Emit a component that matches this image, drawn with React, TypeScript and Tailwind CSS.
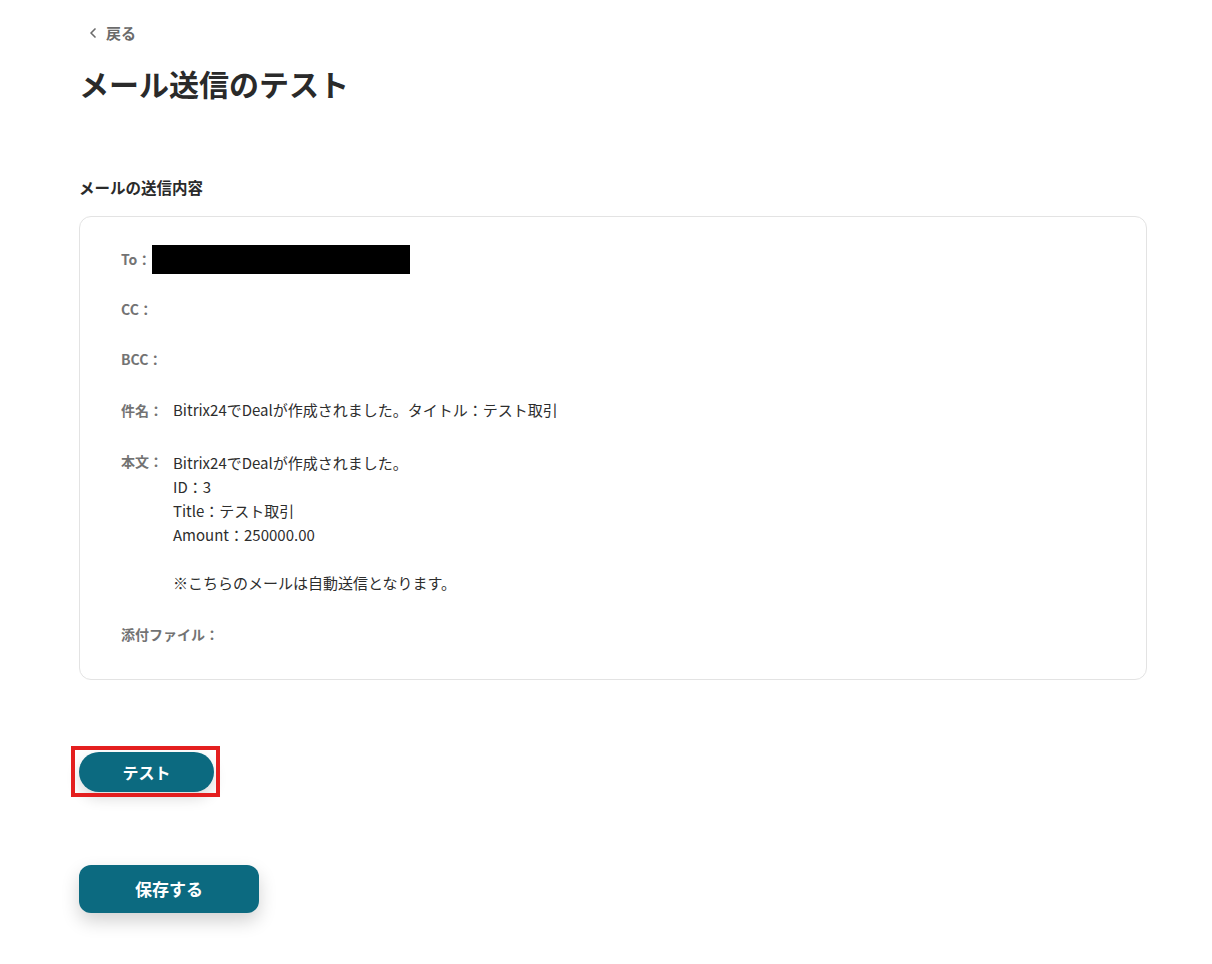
import { ChevronLeft } from "lucide-react";

const font = { fontFamily: '"Noto Sans CJK JP", "Noto Sans", sans-serif' };

const bodyLines = [
  "Bitrix24でDealが作成されました。",
  "ID：3",
  "Title：テスト取引",
  "Amount：250000.00",
  "",
  "※こちらのメールは自動送信となります。",
];

function Row({
  label,
  children,
  className = "",
}: {
  label: string;
  children?: React.ReactNode;
  className?: string;
}) {
  return (
    <div className={`flex items-start ${className}`}>
      <span className="text-sm leading-6 font-semibold text-[#737373] whitespace-nowrap">
        {label}
      </span>
      {children}
    </div>
  );
}

export default function App() {
  return (
    <div className="min-h-screen bg-white text-[#2d2d2d]" style={font}>
      <div className="w-[1068px] ml-[79px] pt-[22px] pb-[50px]">
        {/* Back link */}
        <button className="flex items-center gap-[5px] text-[15px] font-semibold text-[#6b6b6b] ml-[6px]">
          <ChevronLeft className="w-4 h-4" strokeWidth={2.5} />
          戻る
        </button>

        <h1 className="mt-[18px] text-[30px] font-bold leading-10 text-[#2a2a2a]">
          メール送信のテスト
        </h1>

        <h2 className="mt-[72px] text-[15.5px] font-semibold leading-6 text-[#2a2a2a]">
          メールの送信内容
        </h2>

        {/* Mail card */}
        <div className="mt-[17px] rounded-xl border border-[#e3e3e3] pl-[41px] pr-8 pt-[28px] pb-[33px]">
          <div className="flex items-center">
            <span className="text-sm font-semibold text-[#737373]">To：</span>
            <div className="ml-[1px] h-[29px] w-[258px] bg-black" />
          </div>

          <Row label="CC：" className="mt-[23px]" />
          <Row label="BCC：" className="mt-[26px]" />
          <Row label="件名：" className="mt-[27px]">
            <span className="ml-[10px] text-[15px] leading-6 text-[#2d2d2d]">
              Bitrix24でDealが作成されました。タイトル：テスト取引
            </span>
          </Row>
          <Row label="本文：" className="mt-[27px]">
            <div className="ml-[10px] mt-[2px] flex flex-col text-[15px] text-[#2d2d2d]">
              {bodyLines.map((line, i) => (
                <span key={i} className="h-6 leading-6">
                  {line}
                </span>
              ))}
            </div>
          </Row>
          <Row label="添付ファイル：" className="mt-[27px]" />
        </div>

        {/* Test button with highlight */}
        <div className="mt-[72px] relative w-[135px]">
          <button className="h-10 w-[135px] rounded-full bg-[#0c6a80] text-base font-bold text-white shadow-[0_6px_14px_rgba(0,0,0,0.15)]">
            テスト
          </button>
          <div className="absolute -left-[8px] -right-[6px] -top-[6px] -bottom-[5px] border-4 border-[#e41f1f] pointer-events-none" />
        </div>

        <button className="mt-[73px] h-12 w-[180px] rounded-xl bg-[#0c6a80] text-[17px] font-bold text-white shadow-[0_8px_18px_rgba(0,0,0,0.18)]">
          保存する
        </button>
      </div>
    </div>
  );
}
